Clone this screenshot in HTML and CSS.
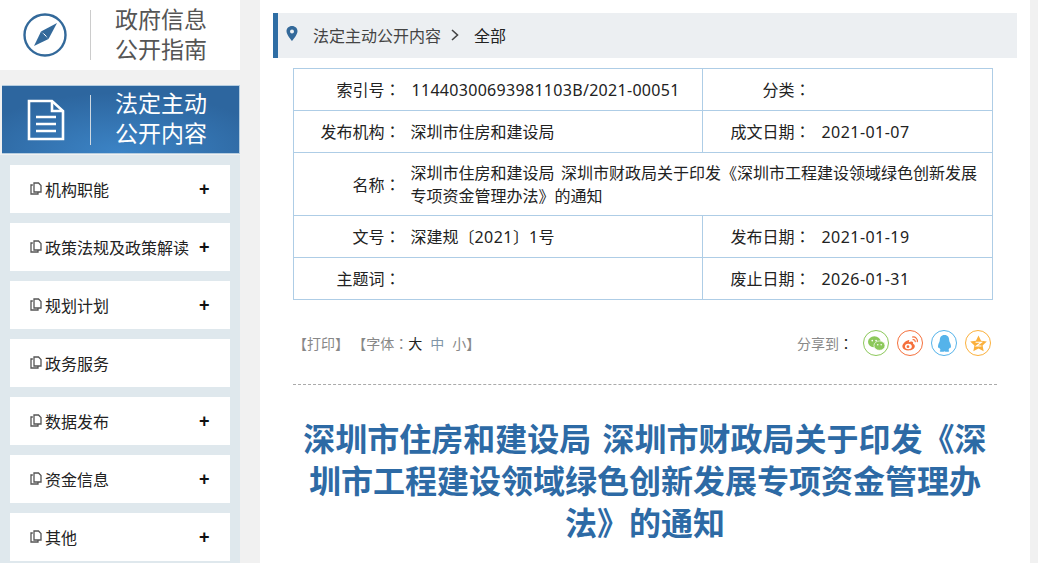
FILE: index.html
```html
<!DOCTYPE html>
<html lang="zh-CN">
<head>
<meta charset="utf-8">
<title>法定主动公开内容</title>
<link rel="stylesheet" href="styles.css">
</head>
<body>
<div class="page">
  <aside class="side">
    <div class="guide">
      <svg class="guide-icon" viewBox="0 0 44 44" width="44" height="44"><circle cx="22" cy="22" r="20.5" fill="none" stroke="#33699a" stroke-width="2.4"/><path d="M34 10 L25.5 26 L18 18.5 Z" fill="#33699a"/><path d="M11 33 L18 18.5 L25.5 26 Z" fill="#33699a"/><path d="M20.500 20.500 L23.500 23.500" stroke="#fff" stroke-width="1"/></svg>
      <span class="vline"></span>
      <div class="head-text">政府信息<br>公开指南</div>
    </div>
    <div class="active">
      <svg class="doc-icon" viewBox="0 0 38 42" width="38" height="42"><path d="M2 2 H25 L36 12 V40 H2 Z" fill="none" stroke="#fff" stroke-width="2.6"/><path d="M25 2 V12 H36" fill="none" stroke="#fff" stroke-width="2.6"/><path d="M9 18 H29 M9 25 H29 M9 32 H29" stroke="#fff" stroke-width="2.6"/></svg>
      <span class="vline light"></span>
      <div class="head-text white">法定主动<br>公开内容</div>
    </div>
    <ul class="menu">
      <li><svg class="pg" viewBox="0 0 12 13" width="12" height="13"><path d="M4 1 H8.500 L11 3.500 V10 H4 Z M2.800 3 H1 V12 H8 V10.800" fill="none" stroke="#555" stroke-width="1.300"/></svg><span>机构职能</span><b class="plus">+</b></li>
      <li><svg class="pg" viewBox="0 0 12 13" width="12" height="13"><path d="M4 1 H8.500 L11 3.500 V10 H4 Z M2.800 3 H1 V12 H8 V10.800" fill="none" stroke="#555" stroke-width="1.300"/></svg><span>政策法规及政策解读</span><b class="plus">+</b></li>
      <li><svg class="pg" viewBox="0 0 12 13" width="12" height="13"><path d="M4 1 H8.500 L11 3.500 V10 H4 Z M2.800 3 H1 V12 H8 V10.800" fill="none" stroke="#555" stroke-width="1.300"/></svg><span>规划计划</span><b class="plus">+</b></li>
      <li><svg class="pg" viewBox="0 0 12 13" width="12" height="13"><path d="M4 1 H8.500 L11 3.500 V10 H4 Z M2.800 3 H1 V12 H8 V10.800" fill="none" stroke="#555" stroke-width="1.300"/></svg><span>政务服务</span></li>
      <li><svg class="pg" viewBox="0 0 12 13" width="12" height="13"><path d="M4 1 H8.500 L11 3.500 V10 H4 Z M2.800 3 H1 V12 H8 V10.800" fill="none" stroke="#555" stroke-width="1.300"/></svg><span>数据发布</span><b class="plus">+</b></li>
      <li><svg class="pg" viewBox="0 0 12 13" width="12" height="13"><path d="M4 1 H8.500 L11 3.500 V10 H4 Z M2.800 3 H1 V12 H8 V10.800" fill="none" stroke="#555" stroke-width="1.300"/></svg><span>资金信息</span><b class="plus">+</b></li>
      <li><svg class="pg" viewBox="0 0 12 13" width="12" height="13"><path d="M4 1 H8.500 L11 3.500 V10 H4 Z M2.800 3 H1 V12 H8 V10.800" fill="none" stroke="#555" stroke-width="1.300"/></svg><span>其他</span><b class="plus">+</b></li>
    </ul>
  </aside>
  <main class="main">
    <div class="crumb">
      <svg class="pin" viewBox="0 0 12 15" width="12" height="15"><path fill-rule="evenodd" d="M6 0 C2.700 0 .5 2.400 .5 5.300 C.5 9 6 15 6 15 C6 15 11.500 9 11.500 5.300 C11.500 2.400 9.300 0 6 0 Z M6 3.500 A2 2 0 1 1 6 7.500 A2 2 0 1 1 6 3.500 Z" fill="#33699a"/></svg>
      <span class="c1">法定主动公开内容</span>
      <svg class="chev" viewBox="0 0 8 12" width="8" height="12"><path d="M1 1 L6.500 6 L1 11" fill="none" stroke="#444" stroke-width="1.600"/></svg>
      <span class="c2">全部</span>
    </div>
    <table class="meta">
      <colgroup><col class="c-l"><col class="c-v"><col class="c-l2"><col class="c-v2"></colgroup>
      <tr><th>索引号<span class="colon" lang="zh-TW">：</span></th><td><span class="num long">11440300693981103B/2021-00051</span></td><th class="b">分类<span class="colon" lang="zh-TW">：</span></th><td></td></tr>
      <tr><th>发布机构<span class="colon" lang="zh-TW">：</span></th><td>深圳市住房和建设局</td><th class="b">成文日期<span class="colon" lang="zh-TW">：</span></th><td><span class="num">2021-01-07</span></td></tr>
      <tr class="tall"><th>名称<span class="colon" lang="zh-TW">：</span></th><td colspan="3">深圳市住房和建设局 深圳市财政局关于印发《深圳市工程建设领域绿色创新发展专项资金管理办法》的通知</td></tr>
      <tr><th>文号<span class="colon" lang="zh-TW">：</span></th><td>深建规〔<span class="num">2021</span>〕<span class="num">1</span>号</td><th class="b">发布日期<span class="colon" lang="zh-TW">：</span></th><td><span class="num">2021-01-19</span></td></tr>
      <tr><th>主题词<span class="colon" lang="zh-TW">：</span></th><td></td><th class="b">废止日期<span class="colon" lang="zh-TW">：</span></th><td><span class="num">2026-01-31</span></td></tr>
    </table>
    <div class="tools">
      <div class="print">【打印】 【字体<span class="colon" lang="zh-TW">：</span><span class="dark">大</span><span class="sz mid">中</span><span class="sz">小</span>】</div>
      <div class="share">
        <span class="share-label">分享到<span class="colon dark" lang="zh-TW">：</span></span>
        <span class="sh wx"><svg viewBox="0 0 20 18" width="20" height="18"><ellipse cx="7.500" cy="7" rx="7.500" ry="6.500" fill="#8cc85a"/><ellipse cx="13.500" cy="11.500" rx="6.500" ry="5.500" fill="#8cc85a" stroke="#fff" stroke-width=".8"/><circle cx="5" cy="5.500" r="1" fill="#fff"/><circle cx="9.500" cy="5.500" r="1" fill="#fff"/><circle cx="11.500" cy="10.500" r=".9" fill="#fff"/><circle cx="15.500" cy="10.500" r=".9" fill="#fff"/></svg></span>
        <span class="sh wb"><svg viewBox="0 0 20 18" width="20" height="18"><path d="M8 5 C4 6 0 10 .5 13 C1 16 5 17.500 9 17 C13 16.500 15.500 14 15 11.500 C14.700 10 13 9.800 13 9.300 C13.500 8 13 6.500 11 6.500 C10 6.500 9 7 8 7.500 C8.500 6 9 4.800 8 5 Z" fill="#f5703c"/><ellipse cx="7.500" cy="12.500" rx="4" ry="3.200" fill="#fff"/><circle cx="7" cy="12.800" r="1.600" fill="#f5703c"/><path d="M12 1.500 C15.500 .5 19 3.500 18 7.500 M12.500 4.500 C14.500 4 16 5.500 15.500 7.500" fill="none" stroke="#f5703c" stroke-width="1.400"/></svg></span>
        <span class="sh qq"><svg viewBox="0 0 20 20" width="20" height="20"><path d="M10 0 C6 0 4.500 3 4.500 6 C4.500 8 3 9.500 2.500 12 C2 14.500 3 16 4 15 C4.300 16 4.800 16.800 5.500 17.500 C4 18 4 19.800 7 19.800 C8.500 19.800 9.500 19.300 10 19 C10.500 19.300 11.500 19.800 13 19.800 C16 19.800 16 18 14.500 17.500 C15.200 16.800 15.700 16 16 15 C17 16 18 14.500 17.500 12 C17 9.500 15.500 8 15.500 6 C15.500 3 14 0 10 0 Z" fill="#55b3ea"/></svg></span>
        <span class="sh qz"><svg viewBox="0 0 20 20" width="20" height="20"><path d="M10 .5 L13 6.800 L19.800 7.700 L14.800 12.400 L16.100 19.200 L10 15.900 L3.900 19.200 L5.200 12.400 L.2 7.700 L7 6.800 Z" fill="#fbb03b"/><path d="M6.500 8.500 H13.500 L7.500 13 H13.500" fill="none" stroke="#fff" stroke-width="1.300"/></svg></span>
      </div>
    </div>
    <h1 class="title">深圳市住房和建设局 深圳市财政局关于印发《深圳市工程建设领域绿色创新发展专项资金管理办法》的通知</h1>
  </main>
</div>
</body>
</html>
```
FILE: styles.css
```css
* { box-sizing: border-box; }
html, body { margin: 0; height: 100%; }
body {
  background: #f1f1f1;
  font-family: "Microsoft YaHei", "Noto Sans CJK SC", sans-serif;
  color: #333;
  overflow: hidden;
}
.page { display: flex; height: 563px; overflow: hidden; }
.side { width: 240px; flex: none; margin-right: 20px; }
.guide {
  height: 70px;
  background: #fff;
  display: flex;
  align-items: center;
  padding-left: 23px;
}
.guide-icon { flex: none; }
.vline { width: 1px; height: 50px; background: #ccc; margin: 0 24px 0 23px; flex: none; }
.vline.light { background: #cfd9e2; height: 50px; margin-left: 25px; }
.head-text {
  font-family: "Liberation Sans", "Noto Sans CJK SC", sans-serif;
  font-size: 23px;
  line-height: 30px;
  color: #555;
}
.head-text.white { color: #fff; margin-top: -1px; }
.active {
  margin: 15px 0 1px 2px;
  height: 69px;
  display: flex;
  align-items: center;
  padding-left: 25px;
  background: radial-gradient(ellipse 65% 90% at 50% 100%, #3c84c6 0%, #2d669f 100%);
  border: 1px solid #b5cde0;
  border-left: 0;
}
.doc-icon { flex: none; }
.menu {
  list-style: none;
  margin: 0;
  padding: 10px 10px 0;
  background: #dfe8ed;
  height: 410px;
}
.menu li {
  height: 48px;
  margin-bottom: 10px;
  background: #fff;
  display: flex;
  align-items: center;
  padding: 0 0 1px 20px;
  font-size: 16px;
  color: #222;
  position: relative;
}
.pg { flex: none; margin-right: 3px; }
.plus {
  position: absolute;
  left: 189px;
  top: 12px;
  font: bold 18px/24px "Liberation Sans", sans-serif;
  color: #111;
}
.main {
  width: 770px;
  flex: none;
  background: #fff;
  padding: 13px 13px 0;
}
.crumb {
  height: 45px;
  background: #eceff2;
  border-left: 5px solid #2e6da4;
  display: flex;
  align-items: center;
  padding: 0 0 2px 8px;
  font-size: 16px;
}
.pin { flex: none; margin-right: 15px; margin-top: -2px; }
.c1 { color: #444; }
.chev { flex: none; margin: 0 15px 0 10px; }
.c2 { color: #222; }
.meta {
  margin: 10px 0 0 20px;
  width: 700px;
  table-layout: fixed;
  border-collapse: collapse;
  font-size: 16px;
  color: #222;
}
.c-l { width: 117px; }
.c-v { width: 292px; }
.c-l2 { width: 119px; }
.meta tr { height: 42px; }
.meta tr.tall { height: 63px; }
.meta th, .meta td {
  border-top: 1px solid #aecde6;
  border-bottom: 1px solid #aecde6;
  font-weight: 400;
  padding: 0 0 1px;
  line-height: 24px;
}
.meta th { text-align: right; padding-right: 10px; border-left: 1px solid #aecde6; }
.meta th.b { padding-right: 11px; }
.meta tr > :last-child { border-right: 1px solid #aecde6; }
.meta tr.tall td { padding-right: 14px; word-spacing: 3px; line-height: 23px; }
.colon { font-family: "Noto Sans CJK TC", sans-serif; }
.num {
  font-family: "Noto Sans", sans-serif;
  letter-spacing: .45px;
}
.num.long { letter-spacing: .3px; margin-left: 1px; }
.tools {
  margin: 25px 20px 0 20px;
  height: 60px;
  padding: 0 6px 0 0;
  border-bottom: 1px dashed #aaa;
  display: flex;
  justify-content: space-between;
  align-items: flex-start;
}
.print { font-size: 14px; line-height: 36px; color: #888; }
.dark { color: #222; }
.sz { margin-left: 8px; }
.mid { color: #7f95a8; }
.share { display: flex; align-items: center; height: 26px; margin-top: 5px; gap: 8px; }
.share-label { font-size: 14px; color: #888; margin-right: 2px; }
.sh {
  width: 26px;
  height: 26px;
  border-radius: 50%;
  border: 1px solid;
  display: flex;
  align-items: center;
  justify-content: center;
}
.sh svg { width: 17px; height: 17px; }
.wx { border-color: #8cc85a; }
.wb { border-color: #f5703c; }
.qq { border-color: #55b3ea; }
.qz { border-color: #fbb03b; }
.title {
  margin: 31px 20px 0;
  font-size: 32px;
  line-height: 42px;
  font-weight: 700;
  word-spacing: 4px;
  color: #2d6aa5;
  text-align: center;
}
```
